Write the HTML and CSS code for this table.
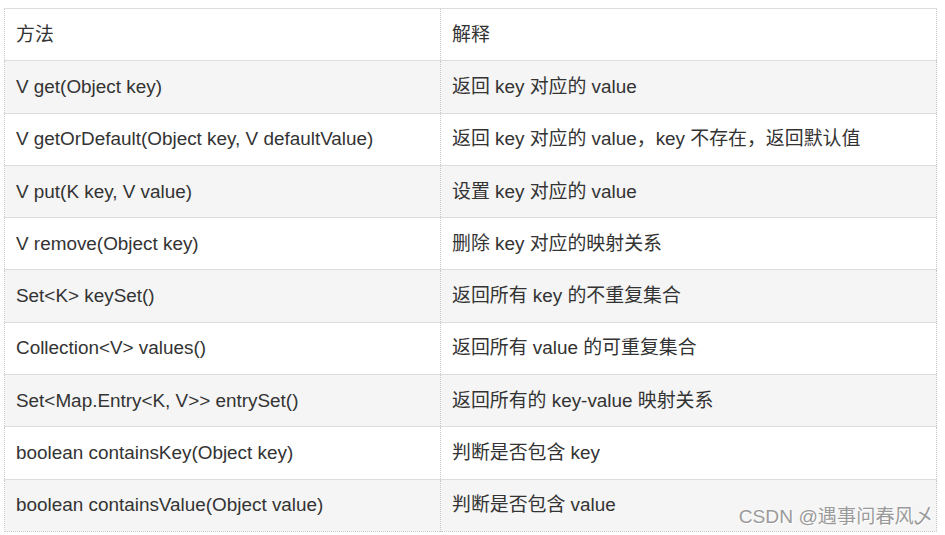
FILE: index.html
```html
<!DOCTYPE html>
<html lang="zh">
<head>
<meta charset="utf-8">
<link rel="stylesheet" href="styles.css">
</head>
<body>
<div class="wrap">
<table class="tbl">
<colgroup><col class="c1"><col class="c2"></colgroup>
<tr><td>方法</td><td>解释</td></tr>
<tr><td>V get(Object key)</td><td>返回 key 对应的 value</td></tr>
<tr><td>V getOrDefault(Object key, V defaultValue)</td><td>返回 key 对应的 value，key 不存在，返回默认值</td></tr>
<tr><td>V put(K key, V value)</td><td>设置 key 对应的 value</td></tr>
<tr><td>V remove(Object key)</td><td>删除 key 对应的映射关系</td></tr>
<tr><td>Set&lt;K&gt; keySet()</td><td>返回所有 key 的不重复集合</td></tr>
<tr><td>Collection&lt;V&gt; values()</td><td>返回所有 value 的可重复集合</td></tr>
<tr><td>Set&lt;Map.Entry&lt;K, V&gt;&gt; entrySet()</td><td>返回所有的 key-value 映射关系</td></tr>
<tr><td>boolean containsKey(Object key)</td><td>判断是否包含 key</td></tr>
<tr><td>boolean containsValue(Object value)</td><td>判断是否包含 value</td></tr>
</table>
<div class="mark">CSDN @遇事问春风乄</div>
</div>
</body>
</html>
```
FILE: styles.css
```css
html, body {
  margin: 0;
  padding: 0;
  background: #fff;
}
.wrap {
  position: relative;
  width: 945px;
  height: 535px;
  padding: 8px 0 0 4px;
  box-sizing: border-box;
}
.tbl {
  border-collapse: collapse;
  width: 932px;
  table-layout: fixed;
  font-family: "Liberation Sans", Arial, "Noto Sans CJK SC", sans-serif;
  font-size: 18.9px;
  line-height: 22px;
  color: #333;
  border-left: 1px dotted #c8c8c8;
  border-right: 1px dotted #c8c8c8;
  border-bottom: 1px dotted #c8c8c8;
}
.c1 { width: 436px; }
.c2 { width: 496px; }
.tbl tr {
  height: 52.3px;
  border-top: 1px solid #ddd;
}
.tbl tr:nth-child(even) {
  background: #f5f5f5;
}
.tbl td {
  padding: 0 11px;
  vertical-align: middle;
  white-space: nowrap;
}
.tbl td + td {
  border-left: 1px dotted #c8c8c8;
}
.mark {
  position: absolute;
  right: 12px;
  bottom: 7px;
  font-family: "Liberation Sans", Arial, "Noto Sans CJK SC", sans-serif;
  font-size: 19.2px;
  line-height: 22px;
  color: #9a9a9a;
  text-shadow: 0 0 1px #fff, 1px 1px 0 #fff;
}
```
